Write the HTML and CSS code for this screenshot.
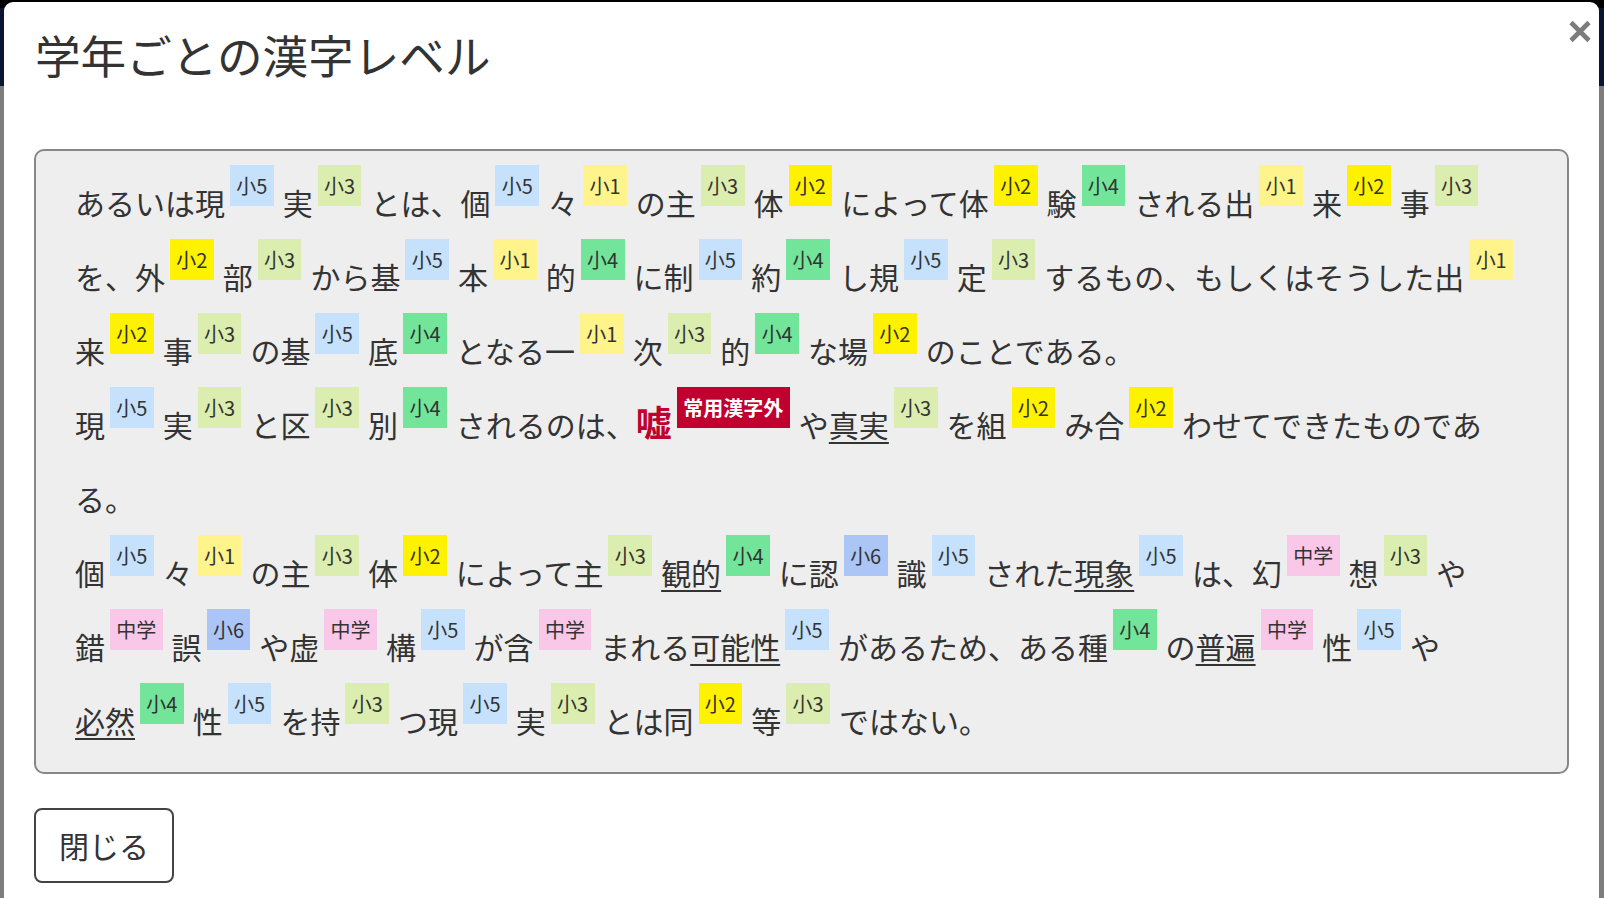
FILE: index.html
```html
<!DOCTYPE html>
<html lang="ja">
<head>
<meta charset="utf-8">
<title>学年ごとの漢字レベル</title>
<link rel="stylesheet" href="styles.css">
</head>
<body>
<div class="page">
  <div class="page-top"></div>
  <div class="page-nav"></div>
  <div class="page-rest"></div>
</div>
<div class="modal">
  <div class="modal-header">
    <h4 class="modal-title">学年ごとの漢字レベル</h4>
    <button class="close" type="button" aria-label="Close"><svg width="24" height="23" viewBox="0 0 24 23"><path d="M3 2.5 L21 20.5 M21 2.5 L3 20.5" stroke="#7c7c7c" stroke-width="4.6" fill="none"/></svg></button>
  </div>
  <div class="modal-body">
    <div class="kanji-box">
      <p class="para">あるいは<span class="k">現<span class="b g5">小5</span></span><span class="k">実<span class="b g3">小3</span></span>とは、<span class="k">個<span class="b g5">小5</span></span><span class="k">々<span class="b g1">小1</span></span>の<span class="k">主<span class="b g3">小3</span></span><span class="k">体<span class="b g2">小2</span></span>によって<span class="k">体<span class="b g2">小2</span></span><span class="k">験<span class="b g4">小4</span></span>される<span class="k">出<span class="b g1">小1</span></span><span class="k">来<span class="b g2">小2</span></span><span class="k">事<span class="b g3">小3</span></span>を、<span class="k">外<span class="b g2">小2</span></span><span class="k">部<span class="b g3">小3</span></span>から<span class="k">基<span class="b g5">小5</span></span><span class="k">本<span class="b g1">小1</span></span><span class="k">的<span class="b g4">小4</span></span>に<span class="k">制<span class="b g5">小5</span></span><span class="k">約<span class="b g4">小4</span></span>し<span class="k">規<span class="b g5">小5</span></span><span class="k">定<span class="b g3">小3</span></span>するもの、もしくはそうした<span class="k">出<span class="b g1">小1</span></span><span class="k">来<span class="b g2">小2</span></span><span class="k">事<span class="b g3">小3</span></span>の<span class="k">基<span class="b g5">小5</span></span><span class="k">底<span class="b g4">小4</span></span>となる<span class="k">一<span class="b g1">小1</span></span><span class="k">次<span class="b g3">小3</span></span><span class="k">的<span class="b g4">小4</span></span>な<span class="k">場<span class="b g2">小2</span></span>のことである。</p>
      <p class="para"><span class="k">現<span class="b g5">小5</span></span><span class="k">実<span class="b g3">小3</span></span>と<span class="k">区<span class="b g3">小3</span></span><span class="k">別<span class="b g4">小4</span></span>されるのは、<span class="k"><span class="outside">嘘</span><span class="b ext">常用漢字外</span></span>や<span class="k"><span class="u">真実</span><span class="b g3">小3</span></span>を<span class="k">組<span class="b g2">小2</span></span>み<span class="k">合<span class="b g2">小2</span></span>わせてできたものである。</p>
      <p class="para"><span class="k">個<span class="b g5">小5</span></span><span class="k">々<span class="b g1">小1</span></span>の<span class="k">主<span class="b g3">小3</span></span><span class="k">体<span class="b g2">小2</span></span>によって<span class="k">主<span class="b g3">小3</span></span><span class="k"><span class="u">観的</span><span class="b g4">小4</span></span>に<span class="k">認<span class="b g6">小6</span></span><span class="k">識<span class="b g5">小5</span></span>された<span class="k"><span class="u">現象</span><span class="b g5">小5</span></span>は、<span class="k">幻<span class="b jh">中学</span></span><span class="k">想<span class="b g3">小3</span></span>や<span class="k">錯<span class="b jh">中学</span></span><span class="k">誤<span class="b g6">小6</span></span>や<span class="k">虚<span class="b jh">中学</span></span><span class="k">構<span class="b g5">小5</span></span>が<span class="k">含<span class="b jh">中学</span></span>まれる<span class="k"><span class="u">可能性</span><span class="b g5">小5</span></span>があるため、ある<span class="k">種<span class="b g4">小4</span></span>の<span class="k"><span class="u">普遍</span><span class="b jh">中学</span></span><span class="k">性<span class="b g5">小5</span></span>や<span class="k"><span class="u">必然</span><span class="b g4">小4</span></span><span class="k">性<span class="b g5">小5</span></span>を<span class="k">持<span class="b g3">小3</span></span>つ<span class="k">現<span class="b g5">小5</span></span><span class="k">実<span class="b g3">小3</span></span>とは<span class="k">同<span class="b g2">小2</span></span><span class="k">等<span class="b g3">小3</span></span>ではない。</p>
    </div>
  </div>
  <div class="modal-footer">
    <button class="btn" type="button">閉じる</button>
  </div>
</div>
</body>
</html>
```

FILE: styles.css
```css
html, body {
  margin: 0;
  padding: 0;
  height: 100%;
  overflow: hidden;
}

body {
  font-family: "Noto Sans CJK JP", "Noto Sans", sans-serif;
  color: #333333;
  background: #7a7a7a;
}

.page {
  display: flex;
  flex-direction: column;
  height: 100%;
}

.page-top {
  height: 8px;
  background: #000000;
}

.page-nav {
  height: 78px;
  background: #0a1433;
}

.page-rest {
  flex: 1;
  background: #7d7d7d;
}

.modal {
  position: fixed;
  left: 4px;
  top: 2px;
  right: 5px;
  bottom: -40px;
  background: #ffffff;
  border-radius: 9px 9px 0 0;
  padding: 0 30px;
  box-sizing: border-box;
}

.modal-header {
  padding-top: 19px;
}

.modal-title {
  margin: 0;
  font-size: 45.6px;
  line-height: 66px;
  font-weight: 400;
  color: #333333;
  padding-left: 1px;
}

.close {
  position: absolute;
  right: 7px;
  top: 18px;
  padding: 0;
  margin: 0;
  border: 0;
  background: transparent;
  width: 24px;
  height: 23px;
  display: block;
}

.close svg {
  display: block;
}

.modal-body {
  padding-top: 62px;
}

.kanji-box {
  border: 2px solid #878787;
  border-radius: 10px;
  background: #eeeeee;
  padding: 14px 39px 15px 39px;
}

.para {
  margin: 0;
  font-size: 30px;
  line-height: 74px;
  color: #333333;
}

.k {
  white-space: nowrap;
}

.b {
  display: inline-block;
  vertical-align: top;
  height: 41px;
  line-height: 41px;
  font-size: 20px;
  padding: 0 6.3px;
  margin: 0 9px 0 5px;
  color: #333333;
}

.g1 { background: #fff38c; }
.g2 { background: #fff200; }
.g3 { background: #dcedb0; }
.g4 { background: #72e59a; }
.g5 { background: #c6e1fb; }
.g6 { background: #abc5f6; }
.jh { background: #f9c7e7; }

.ext {
  background: #c0002f;
  color: #ffffff;
  font-weight: 700;
  padding: 0 6.5px;
}

.outside {
  color: #c0002f;
  font-weight: 700;
  font-size: 36px;
  line-height: 1;
}

.u {
  text-decoration: underline;
  text-decoration-thickness: 2px;
  text-underline-offset: 5px;
}

.modal-footer {
  padding-top: 34px;
}

.btn {
  font-family: "Noto Sans CJK JP", "Noto Sans", sans-serif;
  font-size: 30px;
  line-height: 43px;
  padding: 14px 23px;
  border: 2px solid #444444;
  border-radius: 8px;
  background: #ffffff;
  color: #333333;
  margin: 0;
}
```
